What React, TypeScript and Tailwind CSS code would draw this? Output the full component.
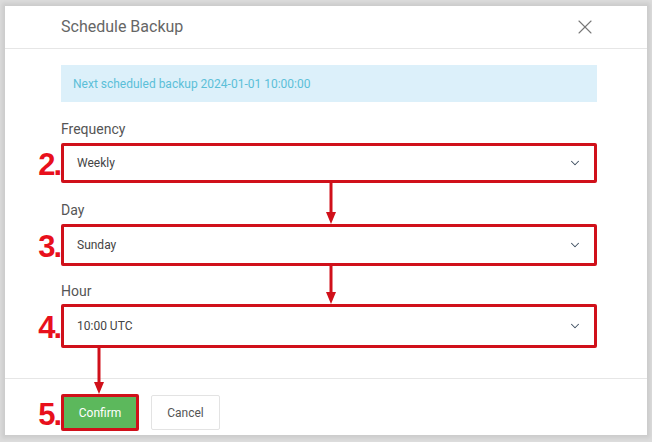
import { ChevronDown, X } from "lucide-react";

const font = { fontFamily: "Roboto, 'Liberation Sans', sans-serif" };
const numFont = { fontFamily: "'Liberation Sans', Arial, sans-serif" };

const Field = ({ num, label, value, gap, h, mb }: { num: string; label: string; value: string; gap: string; h: string; mb: string }) => (
  <div className={`flex flex-col ${gap}`}>
    <div className={`pl-[56px] text-[14px] text-[#555] leading-[18px] ${mb}`}>{label}</div>
    <div className="flex items-center">
      <div className="w-[56px] flex justify-end pr-[1px] pt-[2px] text-[31px] font-bold text-[#e8101c] leading-none tracking-[-2px]" style={numFont}>
        {num}
      </div>
      <div className={`${h} w-[536px] border-[3px] border-[#d0101a] rounded-[2px] flex items-center justify-between pl-[13px] pr-[12px] text-[12px] text-[#444]`}>
        <span>{value}</span>
        <ChevronDown size={14} strokeWidth={1.8} className="text-[#3e4e60]" />
      </div>
    </div>
  </div>
);

const Arrow = ({ x, y1, y2 }: { x: number; y1: number; y2: number }) => (
  <svg className="absolute left-0 top-0 pointer-events-none" width="652" height="442">
    <line x1={x} y1={y1} x2={x} y2={y2 - 10} stroke="#d0101a" strokeWidth="3" />
    <polygon points={`${x - 5},${y2 - 12} ${x + 5},${y2 - 12} ${x},${y2}`} fill="#d0101a" />
  </svg>
);

export default function App() {
  return (
    <div className="relative w-[652px] h-[442px] bg-[#dcdcdc] pt-[6px] px-[5px] pb-[7px]" style={font}>
      <div className="w-full h-full bg-white shadow-[0_0_4px_3px_rgba(0,0,0,0.08)] flex flex-col">
        <div className="h-[43px] shrink-0 border-b border-[#e6e6e6] flex items-center justify-between pl-[56px] pr-[50px]">
          <span className="text-[16px] text-[#666]">Schedule Backup</span>
          <X size={24} strokeWidth={1.1} className="text-[#777]" />
        </div>
        <div className="flex flex-col shrink-0 pt-[16px] pb-[30px]">
          <div className="ml-[56px] w-[536px] h-[37px] shrink-0 bg-[#dcf0fa] flex items-center pl-[12px] text-[12px] text-[#5bbfd8]">
            Next scheduled backup 2024-01-01 10:00:00
          </div>
          <Field num="2." label="Frequency" value="Weekly" gap="mt-[18px]" h="h-[40px]" mb="mb-[5px]" />
          <Field num="3." label="Day" value="Sunday" gap="mt-[18px]" h="h-[42px]" mb="mb-[5px]" />
          <Field num="4." label="Hour" value="10:00 UTC" gap="mt-[16px]" h="h-[44px]" mb="mb-[4px]" />
        </div>
        <div className="flex-1 border-t border-[#e6e6e6] flex items-start pt-[15px]">
          <div className="w-[56px] h-[37px] flex items-center justify-end pr-[1px] pt-[3px] text-[31px] font-bold text-[#e8101c] leading-none tracking-[-2px]" style={numFont}>
            5.
          </div>
          <button className="w-[78px] h-[37px] bg-[#5cb85c] border-[3px] border-[#d0101a] rounded-[2px] text-white text-[12px]">Confirm</button>
          <button className="ml-[12px] mt-[1px] w-[69px] h-[35px] bg-white border border-[#e3e3e3] rounded-[2px] text-[#555] text-[12px]">Cancel</button>
        </div>
      </div>
      <Arrow x={331} y1={183} y2={224} />
      <Arrow x={331} y1={266} y2={304} />
      <Arrow x={99} y1={348} y2={394} />
    </div>
  );
}
